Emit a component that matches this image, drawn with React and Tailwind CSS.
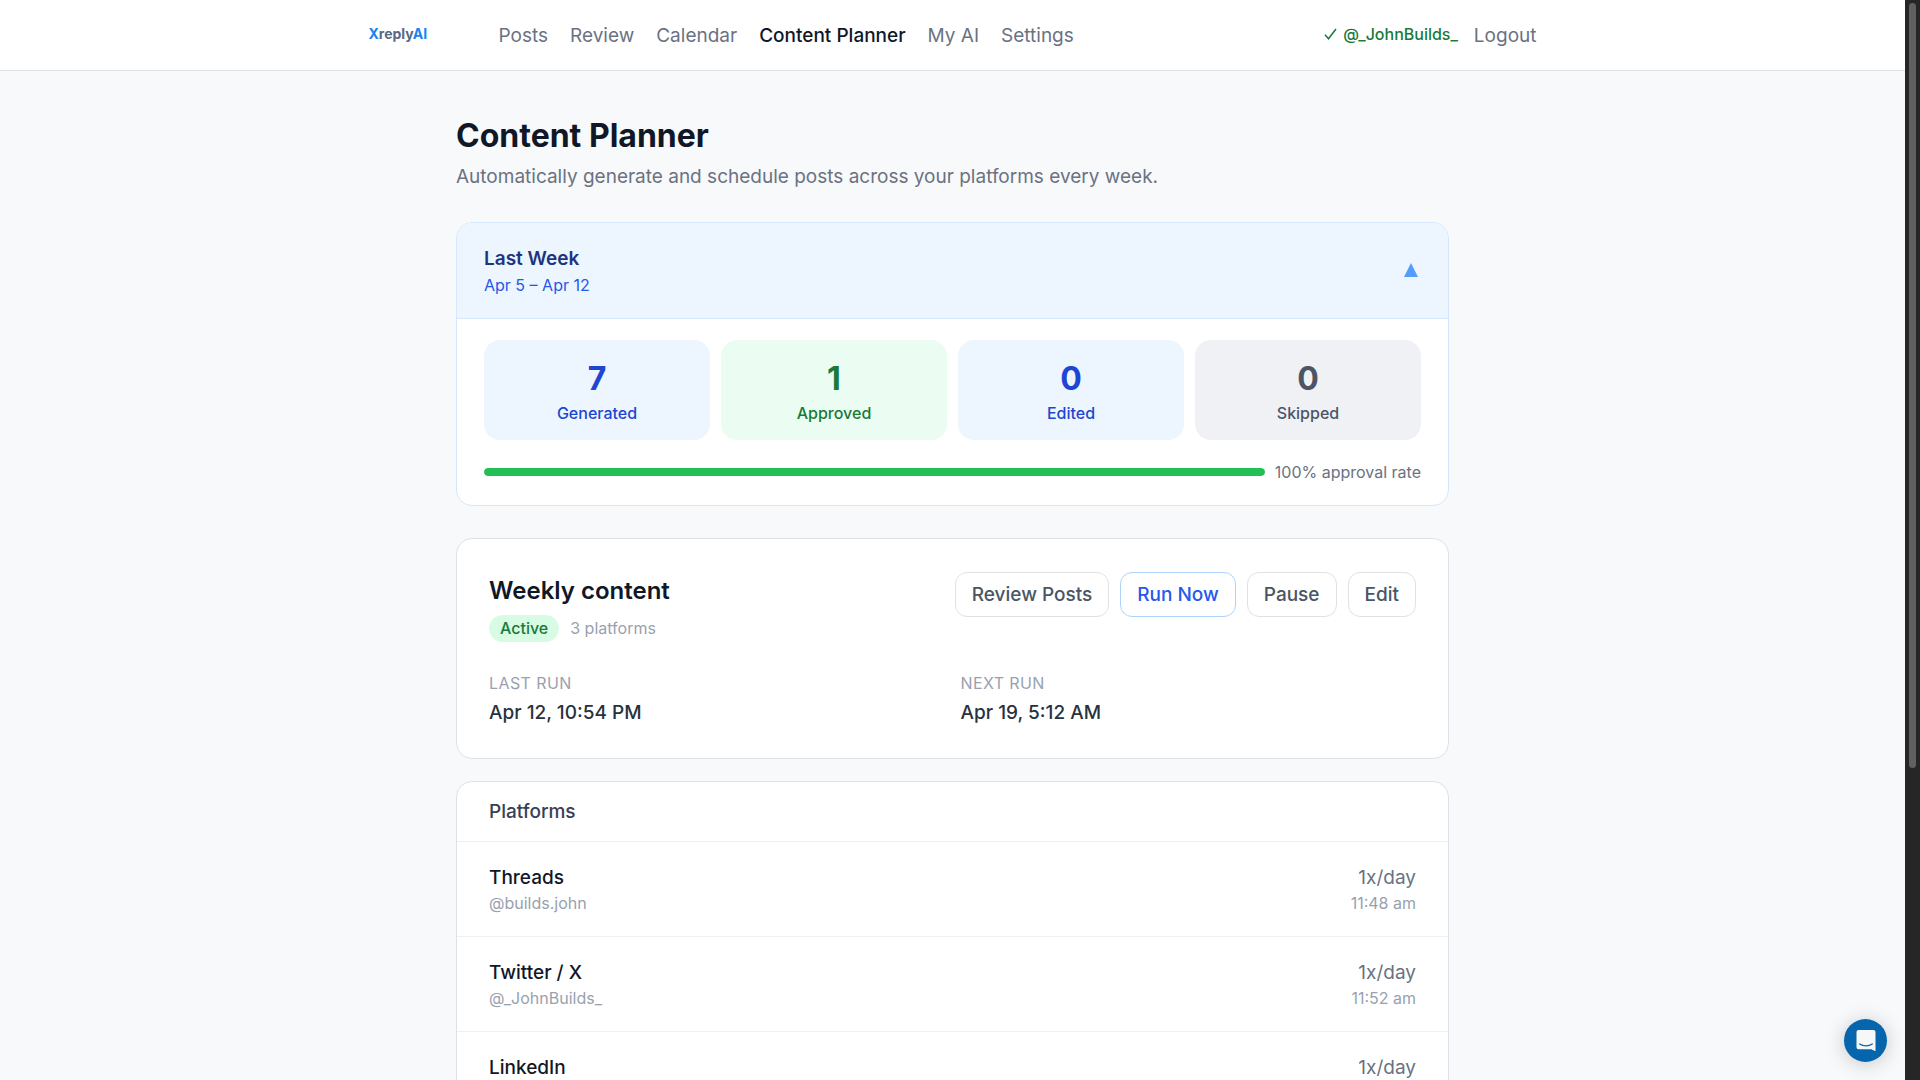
import React from "react";

const navItems = ["Posts", "Review", "Calendar", "Content Planner", "My AI", "Settings"];

const stats = [
  { value: 7, label: "Generated", tone: "bg-[#edf5ff] text-[#1d46d3]" },
  { value: 1, label: "Approved", tone: "bg-[#ebfdf2] text-[#187a3a]" },
  { value: 0, label: "Edited", tone: "bg-[#edf5ff] text-[#1d46d3]" },
  { value: 0, label: "Skipped", tone: "bg-[#f0f1f5] text-gray-600" },
];

const runs = [
  { label: "LAST RUN", value: "Apr 12, 10:54 PM" },
  { label: "NEXT RUN", value: "Apr 19, 5:12 AM" },
];

const platforms = [
  { name: "Threads", handle: "@builds.john", rate: "1x/day", time: "11:48 am" },
  { name: "Twitter / X", handle: "@_JohnBuilds_", rate: "1x/day", time: "11:52 am" },
  { name: "LinkedIn", rate: "1x/day" },
];

function Header() {
  return (
    <header className="border-b border-[#dfe1e6] bg-white">
      <div className="mx-auto flex h-[70px] w-full max-w-[1168px] items-center justify-between">
        <div className="flex items-center">
          <a href="#home" className="w-[130px] pb-0.5 text-[14px] leading-5 font-bold text-[#5b6785]">
            <span className="text-[#1685f0]">X</span>reply<span className="text-[#1685f0]">AI</span>
          </a>
          <nav className="flex items-center gap-[22px]">
            {navItems.map((item) => (
              <a
                key={item}
                href="#nav"
                className={item === "Content Planner" ? "font-medium text-gray-900" : "text-gray-500"}
              >
                {item}
              </a>
            ))}
          </nav>
        </div>
        <div className="flex items-center gap-4">
          <span className="flex items-center gap-1.5 pb-0.5 text-[16px] leading-6 font-medium text-[#187a3a]">
            <svg viewBox="0 0 13 12" className="h-3 w-[13px]" fill="none" stroke="currentColor" strokeWidth="1.5" aria-hidden="true">
              <path d="M1 6.800 4.500 10.800 12 1" />
            </svg>
            @_JohnBuilds_
          </span>
          <button type="button" className="text-gray-500">Logout</button>
        </div>
      </div>
    </header>
  );
}

function LastWeek() {
  return (
    <section className="mt-8 overflow-hidden rounded-2xl border border-[#d5e7fd] bg-white">
      <button
        type="button"
        className="flex w-full items-center justify-between border-b border-[#d5e7fd] bg-[#edf5ff] px-[27px] pt-[22px] pb-[21px] text-left"
      >
        <span>
          <span className="block font-semibold text-[#1c3583]">Last Week</span>
          <span className="mt-px block text-[16px] leading-6 text-[#2459ec]">Apr 5 – Apr 12</span>
        </span>
        <svg viewBox="0 0 14 14" className="mr-[3px] mb-0.5 size-[14px]" aria-hidden="true">
          <path d="M7 0 14 14H0Z" fill="#559dfc" />
        </svg>
      </button>
      <div className="px-[27px] pt-[21px] pb-[21px]">
        <div className="grid grid-cols-4 gap-[11px]">
          {stats.map((s) => (
            <div key={s.label} className={`rounded-2xl pt-4 pb-[15px] text-center ${s.tone}`}>
              <div className="text-[32px] leading-[45px] font-bold">{s.value}</div>
              <div className="text-[16px] leading-6 font-medium">{s.label}</div>
            </div>
          ))}
        </div>
        <div className="mt-5 flex items-center gap-2.5">
          <div className="h-2 flex-1 overflow-hidden rounded-full bg-gray-100">
            <div className="h-full w-full rounded-full bg-[#21bf55]" />
          </div>
          <span className="text-[16px] leading-6 text-gray-500">100% approval rate</span>
        </div>
      </div>
    </section>
  );
}

function ActionButton({ children, primary }) {
  return (
    <button
      type="button"
      className={`rounded-xl border px-4 py-2 font-medium ${
        primary ? "border-[#aed2fc] text-[#2459ec]" : "border-[#dfe1e6] text-gray-600"
      }`}
    >
      {children}
    </button>
  );
}

function WeeklyContent() {
  return (
    <section className="mt-8 rounded-2xl border border-[#dfe1e6] bg-white px-8 pt-[33px] pb-8">
      <div className="flex items-start justify-between">
        <div>
          <h2 className="text-[24px] leading-[38px] font-semibold text-gray-900">Weekly content</h2>
          <div className="mt-[5px] flex items-center gap-[11px] text-[16px] leading-[27px]">
            <span className="rounded-full bg-[#d8fbe3] px-[11px] font-medium text-[#187a3a]">Active</span>
            <span className="text-gray-400">3 platforms</span>
          </div>
        </div>
        <div className="flex gap-[11px]">
          <ActionButton>Review Posts</ActionButton>
          <ActionButton primary>Run Now</ActionButton>
          <ActionButton>Pause</ActionButton>
          <ActionButton>Edit</ActionButton>
        </div>
      </div>
      <dl className="mt-[29px] grid grid-cols-2 gap-4">
        {runs.map((r) => (
          <div key={r.label}>
            <dt className="text-[16px] leading-6 tracking-wide text-gray-400">{r.label}</dt>
            <dd className="mt-1 font-medium text-[#28323f]">{r.value}</dd>
          </div>
        ))}
      </dl>
    </section>
  );
}

function Platforms() {
  return (
    <section className="mt-[22px] rounded-2xl border border-[#dfe1e6] bg-white">
      <h3 className="px-8 py-4 font-medium text-gray-700">Platforms</h3>
      <ul>
        {platforms.map((p) => (
          <li key={p.name} className="flex items-start justify-between border-t border-[#eff0f4] px-8 pt-[22px] pb-[21px]">
            <div>
              <div className="font-medium text-gray-900">{p.name}</div>
              {p.handle && <div className="text-[16px] leading-6 text-gray-400">{p.handle}</div>}
            </div>
            <div className="text-right">
              <div className="text-gray-500">{p.rate}</div>
              {p.time && <div className="text-[16px] leading-6 text-gray-400">{p.time}</div>}
            </div>
          </li>
        ))}
      </ul>
    </section>
  );
}

function ChatLauncher() {
  return (
    <button
      type="button"
      aria-label="Open chat"
      className="absolute right-[18px] bottom-[18px] flex size-[43px] items-center justify-center rounded-full bg-[#0566ae] shadow-[0_2px_20px_rgba(0,0,0,0.2)]"
    >
      <svg viewBox="0 0 20 21" className="h-[21px] w-5" fill="none" aria-hidden="true">
        <path d="M2.500 0h15A2 2 0 0 1 19.500 2v19c-1.500-.2-3-.8-4-1.700H2.500a2 2 0 0 1-2-2V2a2 2 0 0 1 2-2Z" fill="#f7f7f7" />
        <path d="M3.700 14c3.600 2.400 9 2.400 12.600 0" stroke="#0566ae" strokeWidth="1.300" strokeLinecap="round" />
      </svg>
    </button>
  );
}

export default function App() {
  return (
    <div className="flex h-screen overflow-hidden bg-[#f8f9fb] font-['Inter',sans-serif] text-[19px] leading-[27px]">
      <div className="relative min-w-0 flex-1 overflow-hidden">
        <Header />
        <main className="mx-auto w-full max-w-[993px] pt-11">
          <h1 className="text-[32px] leading-[42px] font-bold text-gray-900">Content Planner</h1>
          <p className="mt-1.5 text-gray-500">Automatically generate and schedule posts across your platforms every week.</p>
          <LastWeek />
          <WeeklyContent />
          <Platforms />
        </main>
        <ChatLauncher />
      </div>
      <div className="w-[15px] bg-[#262626] px-1 pt-[3px]" aria-hidden="true">
        <div className="h-[71%] rounded-full bg-[#606060]" />
      </div>
    </div>
  );
}
